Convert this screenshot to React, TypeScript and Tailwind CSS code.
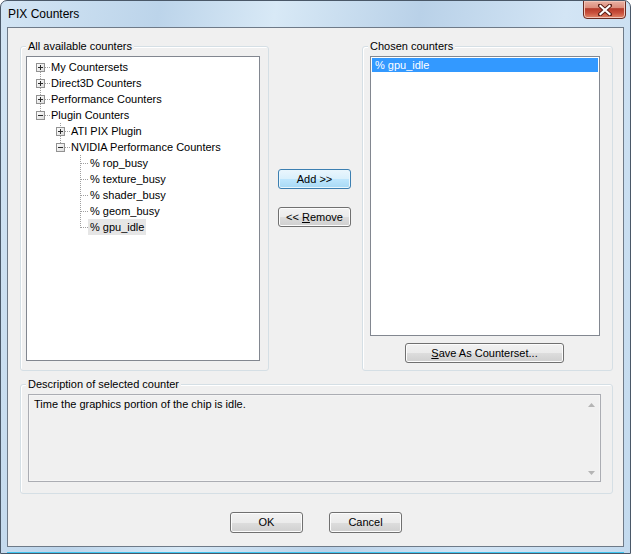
import React from "react";

const font = { fontFamily: '"Liberation Sans", Arial, sans-serif' };

type Row = { level: 1 | 2 | 3; label: string; selected?: boolean };
const rows: Row[] = [
  { level: 1, label: "My Countersets" },
  { level: 1, label: "Direct3D Counters" },
  { level: 1, label: "Performance Counters" },
  { level: 1, label: "Plugin Counters" },
  { level: 2, label: "ATI PIX Plugin" },
  { level: 2, label: "NVIDIA Performance Counters" },
  { level: 3, label: "% rop_busy" },
  { level: 3, label: "% texture_busy" },
  { level: 3, label: "% shader_busy" },
  { level: 3, label: "% geom_busy" },
  { level: 3, label: "% gpu_idle", selected: true },
];

function Box({ cx, cy, plus }: { cx: number; cy: number; plus: boolean }) {
  return (
    <g>
      <rect x={cx - 3.5} y={cy - 3.5} width={8} height={8} fill="url(#bx)" stroke="#929292" />
      <line x1={cx - 2} x2={cx + 3} y1={cy + 0.5} y2={cy + 0.5} stroke="#2a2a2a" />
      {plus && <line x1={cx + 0.5} x2={cx + 0.5} y1={cy - 2} y2={cy + 3} stroke="#2a2a2a" />}
    </g>
  );
}

function TreeLines() {
  const dot = { stroke: "#a0a0a0", strokeDasharray: "1 1" };
  const cy = (i: number) => 10 + 16 * i;
  return (
    <svg className="absolute left-0 top-0" width={232} height={200}>
      <defs>
        <linearGradient id="bx" x1="0" y1="0" x2="1" y2="1">
          <stop offset="0" stopColor="#ffffff" />
          <stop offset="1" stopColor="#dadada" />
        </linearGradient>
      </defs>
      <line x1={13.5} x2={13.5} y1={cy(0) + 5} y2={cy(3) - 4} {...dot} />
      {[0, 1, 2, 3].map((i) => (
        <line key={i} x1={18} x2={23} y1={cy(i) + 0.5} y2={cy(i) + 0.5} {...dot} />
      ))}
      <line x1={33.5} x2={33.5} y1={cy(4) - 8} y2={cy(4) - 4} {...dot} />
      <line x1={33.5} x2={33.5} y1={cy(4) + 5} y2={cy(5) - 4} {...dot} />
      {[4, 5].map((i) => (
        <line key={i} x1={38} x2={43} y1={cy(i) + 0.5} y2={cy(i) + 0.5} {...dot} />
      ))}
      <line x1={53.5} x2={53.5} y1={cy(6) - 8} y2={cy(10) + 1} {...dot} />
      {[6, 7, 8, 9, 10].map((i) => (
        <line key={i} x1={54} x2={62} y1={cy(i) + 0.5} y2={cy(i) + 0.5} {...dot} />
      ))}
      <Box cx={13} cy={cy(0)} plus />
      <Box cx={13} cy={cy(1)} plus />
      <Box cx={13} cy={cy(2)} plus />
      <Box cx={13} cy={cy(3)} plus={false} />
      <Box cx={33} cy={cy(4)} plus />
      <Box cx={33} cy={cy(5)} plus={false} />
    </svg>
  );
}

function Btn({
  children,
  w,
  h = 20,
  focus = false,
}: {
  children: React.ReactNode;
  w: string;
  h?: number;
  focus?: boolean;
}) {
  return (
    <div
      className={
        "flex items-center justify-center rounded-[3px] border text-[11px] text-black " +
        w +
        (focus
          ? " border-[#3c7fb1] bg-[linear-gradient(#eaf6fd_0%,#d9f0fc_50%,#bee6fd_51%,#a7d9f5_100%)] shadow-[inset_0_0_0_1px_#e8f6fd]"
          : " border-[#707070] bg-[linear-gradient(#f2f2f2_0%,#ebebeb_50%,#dddddd_51%,#cfcfcf_100%)] shadow-[inset_0_0_0_1px_#fcfcfc]")
      }
      style={{ height: h }}
    >
      <span className="whitespace-pre">{children}</span>
    </div>
  );
}

function Group({
  label,
  className,
  children,
}: {
  label: string;
  className: string;
  children: React.ReactNode;
}) {
  return (
    <div className={"relative rounded-[3px] border border-[#d5dfe5] shadow-[inset_1px_1px_0_#ffffff] " + className}>
      <span className="absolute left-[5px] top-[-7px] bg-[#f0f0f0] px-[2px] text-[11px] leading-[13px] text-black">
        {label}
      </span>
      {children}
    </div>
  );
}

export default function App() {
  return (
    <div
      className="relative h-[554px] w-[631px] overflow-hidden rounded-t-[7px] border border-[#4a5868] bg-[linear-gradient(100deg,#d3e5f4_0%,#bcd4ea_22%,#d8e9f6_38%,#b9d1e8_58%,#d3e5f5_78%,#c3daee_100%)]"
      style={font}
    >
      <div className="flex h-[26px] items-center pl-[7px] text-[12px] text-black">PIX Counters</div>
      <div className="absolute right-[4px] top-[-1px] flex h-[19px] w-[43px] items-center justify-center rounded-b-[4px] border border-[#6a2b22] bg-[linear-gradient(#eab2a4_0%,#dc8d7c_40%,#b53a2a_45%,#c9503c_70%,#e0876a_100%)] shadow-[inset_0_0_0_1px_#f2c5b8]">
        <svg width="14" height="12" viewBox="0 0 14 12">
          <path d="M2 1.5 L12 10.5 M12 1.5 L2 10.5" stroke="#5a1e16" strokeWidth="4" strokeLinecap="square" />
          <path d="M2.5 2 L11.5 10 M11.5 2 L2.5 10" stroke="#ffffff" strokeWidth="2.2" strokeLinecap="square" />
        </svg>
      </div>

      <div className="ml-[6px] flex h-[520px] w-[617px] flex-col border border-[#6e7a88] bg-[#f0f0f0] pl-[12px] pr-[10px] pt-[18px]">
        <div className="flex h-[325px]">
          <Group label="All available counters" className="w-[249px] pl-[5px] pt-[9px]">
            <div className="relative h-[305px] w-[234px] border border-[#828790] bg-white pt-[2px]">
              <TreeLines />
              {rows.map((r, i) => (
                <div
                  key={i}
                  className={
                    "relative flex h-[16px] items-center " +
                    (r.level === 1 ? "pl-[22px]" : r.level === 2 ? "pl-[42px]" : "pl-[61px]")
                  }
                >
                  <span
                    className={
                      "px-[2px] text-[11px] leading-[16px] text-black " + (r.selected ? "bg-[#e6e6e6]" : "")
                    }
                  >
                    {r.label}
                  </span>
                </div>
              ))}
            </div>
          </Group>

          <div className="flex w-[93px] flex-col pl-[9px] pt-[123px]">
            <Btn w="w-[73px]" focus>
              {"Add >>"}
            </Btn>
            <div className="h-[18px]" />
            <Btn w="w-[73px]">
              {"<< "}
              <span className="underline">R</span>
              {"emove"}
            </Btn>
          </div>

          <Group label="Chosen counters" className="w-[251px] pl-[7px] pt-[9px]">
            <div className="h-[280px] w-[230px] border border-[#828790] bg-white p-[1px]">
              <div className="flex h-[14px] items-center bg-[#3399ff] pl-[3px] text-[11px] text-white">
                % gpu_idle
              </div>
            </div>
            <div className="pl-[35px] pt-[7px]">
              <Btn w="w-[159px]">
                <span className="underline">S</span>
                {"ave As Counterset..."}
              </Btn>
            </div>
          </Group>
        </div>

        <Group label="Description of selected counter" className="mt-[13px] h-[110px] w-[593px] pl-[7px] pt-[9px]">
          <div className="flex h-[88px] w-[573px] border border-[#abadb3] bg-[#f0f0f0] shadow-[inset_0_0_0_1px_#f5f5f5]">
            <div className="flex-1 pl-[5px] pt-[2px] text-[11px] leading-[14px] text-black">
              Time the graphics portion of the chip is idle.
            </div>
            <div className="flex w-[17px] flex-col items-center justify-between pb-[6px] pt-[8px]">
              <svg width="7" height="4" viewBox="0 0 7 4">
                <path d="M0 4 L3.5 0 L7 4 Z" fill="#b4b4b4" />
              </svg>
              <svg width="7" height="4" viewBox="0 0 7 4">
                <path d="M0 0 L3.5 4 L7 0 Z" fill="#b4b4b4" />
              </svg>
            </div>
          </div>
        </Group>

        <div className="mt-[18px] flex justify-center gap-[26px] pr-[1px]">
          <Btn w="w-[73px]" h={21}>
            OK
          </Btn>
          <Btn w="w-[73px]" h={21}>
            Cancel
          </Btn>
        </div>
      </div>
      <div className="absolute bottom-0 left-[6px] right-[6px] h-[1px] bg-[#3fc5f0]" />
    </div>
  );
}
